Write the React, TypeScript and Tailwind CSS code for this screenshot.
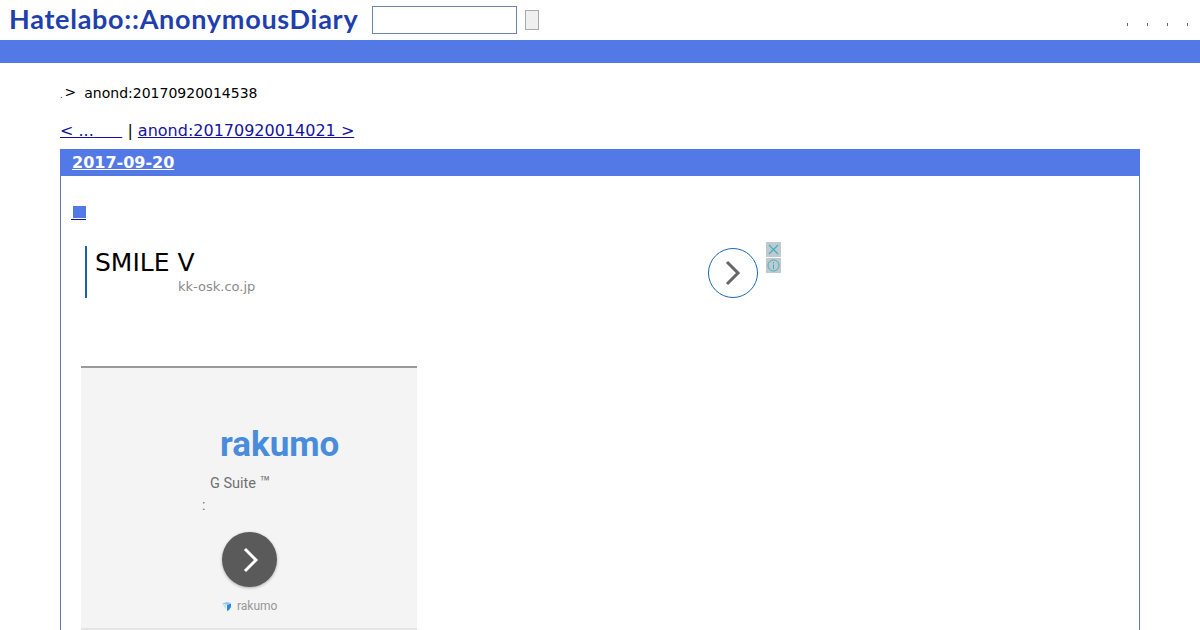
export default function App() {
  return (
    <div className="h-[630px] w-full overflow-hidden bg-white text-black font-['DejaVu_Sans',sans-serif]">
      {/* header */}
      <div className="flex h-10 items-center pl-[9px]">
        <a className="mt-[-3px] w-[349px] whitespace-nowrap font-['Lato',sans-serif] text-[27px] font-bold leading-none tracking-[0.72px] text-[#1f3fae]">
          Hatelabo::AnonymousDiary
        </a>
        <input className="ml-[14px] mt-[-1px] h-7 w-[145px] border border-[#6a83ad] bg-white" />
        <button className="ml-2 mt-[-1px] h-5 w-[14px] border border-[#a9a9a9] bg-[#efefef]" />
        <div className="ml-auto mr-[12px] mt-[9px] flex gap-[19px]">
          <span className="h-[3px] w-px bg-[#666]" />
          <span className="h-[3px] w-px bg-[#666]" />
          <span className="h-[3px] w-px bg-[#666]" />
          <span className="h-[3px] w-px bg-[#666]" />
        </div>
      </div>
      <div className="h-[23px] bg-[#5279e5]" />

      <div className="px-[60px]">
        {/* breadcrumb */}
        <div className="mt-[21px] flex h-[18px] items-center text-sm leading-[18px]">
          <span className="mt-[5px] text-[8px] leading-none">.</span>
          <span className="ml-[2px] mt-[-2px]">&gt;</span>
          <span className="ml-[8px]">anond:20170920014538</span>
        </div>

        {/* prev / next */}
        <div className="mt-[19px] h-[19px] whitespace-nowrap text-base leading-[19px]">
          <a className="text-[#14149b] underline">
            &lt; ...<span className="tracking-[-0.33px]">&nbsp;&nbsp;&nbsp;&nbsp;&nbsp;&nbsp;</span>
          </a>
          <span> | </span>
          <a className="text-[#14149b] underline">anond:20170920014021 &gt;</a>
        </div>

        {/* day box */}
        <div className="mt-[9px] border border-t-0 border-[#6478b0] pb-10">
          <div className="-mx-px flex h-[27px] items-center bg-[#5279e5] pl-[12px]">
            <a className="text-base font-bold text-white underline">2017-09-20</a>
          </div>

          <div className="pl-[10px] pt-[28px]">
            <a className="flex h-[16px] w-[15px] items-start justify-end border-b border-[#14149b]">
              <span className="mt-[2px] h-[12px] w-[13px] bg-[#5279e5]" />
            </a>
          </div>

          {/* text ad */}
          <div className="relative ml-[24px] mt-[26px] flex h-[52px] w-[673px]">
            <div className="w-[2px] bg-[#1d5fa8]" />
            <div className="pl-[8px]">
              <div className="mt-[1px] text-[25px] leading-[32px]">SMILE V</div>
              <div className="ml-[83px] text-[13px] leading-[16px] text-[#8a8a8a]">kk-osk.co.jp</div>
            </div>
            <div className="ml-auto mt-[2px] flex h-[50px] w-[50px] items-center justify-center rounded-full border border-[#1d67b5]">
              <svg width="20" height="28" viewBox="0 0 20 28" fill="none" stroke="#666" strokeWidth="3">
                <path d="M4 3l11 11L4 25" />
              </svg>
            </div>
            <div className="absolute left-[681px] top-[-4px] flex flex-col gap-[1px]">
              <span className="flex h-[15px] w-[15px] items-center justify-center bg-[#c0cacc]">
                <svg width="11" height="11" viewBox="0 0 11 11" stroke="#3ab0c8" strokeWidth="1.2">
                  <path d="M1 1l9 9M10 1l-9 9" />
                </svg>
              </span>
              <span className="flex h-[15px] w-[15px] items-center justify-center bg-[#c0cacc]">
                <svg width="13" height="13" viewBox="0 0 13 13" fill="none" stroke="#3ab0c8">
                  <circle cx="6.5" cy="6.5" r="5.5" />
                  <path d="M6.5 5.5v4.500M6.500 3v1.500" />
                </svg>
              </span>
            </div>
          </div>

          {/* display ad */}
          <div className="ml-[20px] mt-[68px] h-[264px] w-[336px] border-y-2 border-t-[#999] border-b-[#e4e4e4] bg-[#f4f4f4] font-['Roboto',sans-serif]">
            <div className="flex h-[260px] flex-col">
              <div className="ml-[139px] mt-[57px] text-[35px] font-bold leading-[40px] text-[#4a8cdc]">rakumo</div>
              <div className="ml-[129px] mt-[9px] text-[14.5px] leading-[20px] text-[#707070]">
                G Suite <span className="text-[17px] leading-none">™</span>
              </div>
              <div className="ml-[121px] mt-[1px] text-sm leading-[20px] text-[#707070]">:</div>
              <div className="ml-[141px] mt-[17px] flex h-[55px] w-[55px] items-center justify-center rounded-full bg-[#5a5a5a] shadow-[0_1px_3px_rgba(0,0,0,0.3)]">
                <svg width="20" height="26" viewBox="0 0 20 26" fill="none" stroke="#fff" strokeWidth="3">
                  <path d="M5 2l11 11L5 24" />
                </svg>
              </div>
              <div className="ml-[140px] mt-[11px] flex h-[16px] items-center text-xs text-[#999]">
                <svg width="11" height="11" viewBox="0 0 11 11">
                  <path d="M1 2.500l5-1.500 4 1-4 2z" fill="#8fc5f2" />
                  <path d="M6 4l4-1.500V6l-2 3-2 1z" fill="#2a86e0" />
                  <path d="M1 3l4 1.500V8z" fill="#bcdcf7" />
                </svg>
                <span className="ml-[5px]">rakumo</span>
              </div>
            </div>
          </div>
        </div>
      </div>
    </div>
  );
}
